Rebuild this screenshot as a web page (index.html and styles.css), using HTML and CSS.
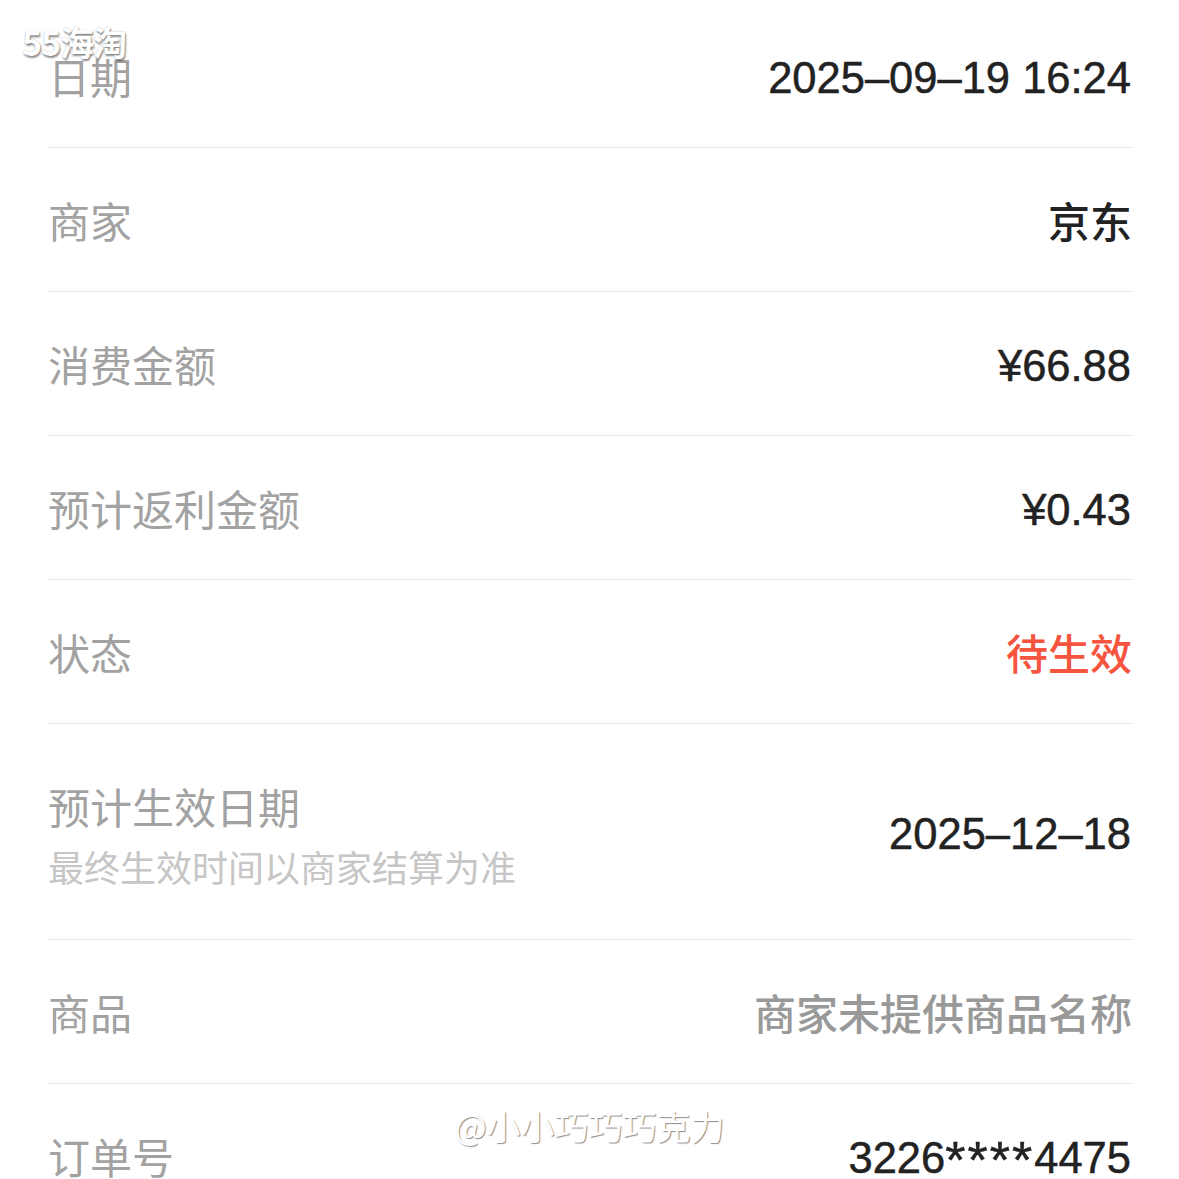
FILE: index.html
```html
<!DOCTYPE html>
<html lang="zh-CN">
<head>
<meta charset="utf-8">
<title>订单详情</title>
<link rel="stylesheet" href="styles.css">
</head>
<body>
<div class="page">
  <div class="wm-top">55海淘</div>
  <ul class="list">
    <li class="row">
      <div class="label">日期</div>
      <div class="value num">2025–09–19 16:24</div>
    </li>
    <li class="row">
      <div class="label">商家</div>
      <div class="value">京东</div>
    </li>
    <li class="row">
      <div class="label">消费金额</div>
      <div class="value num">¥66.88</div>
    </li>
    <li class="row">
      <div class="label">预计返利金额</div>
      <div class="value num">¥0.43</div>
    </li>
    <li class="row">
      <div class="label">状态</div>
      <div class="value status">待生效</div>
    </li>
    <li class="row tall">
      <div class="label-group">
        <div class="label">预计生效日期</div>
        <div class="sub">最终生效时间以商家结算为准</div>
      </div>
      <div class="value num">2025–12–18</div>
    </li>
    <li class="row">
      <div class="label">商品</div>
      <div class="value muted">商家未提供商品名称</div>
    </li>
    <li class="row">
      <div class="label">订单号</div>
      <div class="value num">3226<span class="mask">****</span>4475</div>
    </li>
  </ul>
  <div class="wm-bottom">@小小巧巧巧克力</div>
</div>
</body>
</html>
```

FILE: styles.css
```css
* { box-sizing: border-box; }
html, body {
  margin: 0;
  padding: 0;
  background: #ffffff;
}
body {
  font-family: "Liberation Sans", "Noto Sans CJK SC", sans-serif;
  overflow: hidden;
  height: 1179px;
}
.page {
  position: relative;
  width: 1179px;
  height: 1179px;
  overflow: hidden;
}
.list {
  list-style: none;
  margin: 4px 0 0 0;
  padding: 0 47px 0 48px;
}
.row {
  display: flex;
  align-items: center;
  justify-content: space-between;
  height: 144px;
  border-bottom: 1px solid #e9e9e9;
}
.row.tall {
  height: 216px;
}
.label {
  font-family: "Noto Sans CJK SC", sans-serif;
  font-size: 42px;
  line-height: 50px;
  color: #a2a2a2;
  font-weight: 400;
}
.label-group {
  display: flex;
  flex-direction: column;
  padding-top: 6px;
}
.label-group .label {
  line-height: 50px;
  margin-bottom: 12px;
}
.sub {
  font-family: "Noto Sans CJK SC", sans-serif;
  font-size: 36px;
  line-height: 46px;
  color: #c6c6c6;
}
.value {
  font-family: "Noto Sans CJK SC", sans-serif;
  font-size: 42px;
  line-height: 50px;
  font-weight: 500;
  color: #222222;
  text-align: right;
}
.value.num {
  font-family: "Liberation Sans", sans-serif;
  font-size: 43.5px;
  font-weight: 400;
  -webkit-text-stroke: 0.5px #222222;
  padding-top: 4px;
  margin-right: 1px;
}
.mask {
  font-size: 52px;
  line-height: 40px;
  letter-spacing: 2px;
  vertical-align: -5px;
}
.value.status {
  color: #f5543e;
}
.value.muted {
  color: #999999;
}
.wm-top {
  position: absolute;
  left: 22px;
  top: 22px;
  font-family: "Noto Sans CJK SC", sans-serif;
  font-size: 34px;
  line-height: 40px;
  font-weight: 700;
  letter-spacing: -1px;
  color: #ffffff;
  text-shadow: 1px 2px 2px rgba(0, 0, 0, 0.45), 0 0 1px rgba(0, 0, 0, 0.3);
}
.wm-bottom {
  position: absolute;
  left: 0;
  right: 0;
  top: 1104px;
  text-align: center;
  font-family: "Noto Sans CJK SC", sans-serif;
  font-size: 34px;
  line-height: 44px;
  color: #ffffff;
  text-shadow: 1px 1px 1px rgba(0, 0, 0, 0.45);
}
```
